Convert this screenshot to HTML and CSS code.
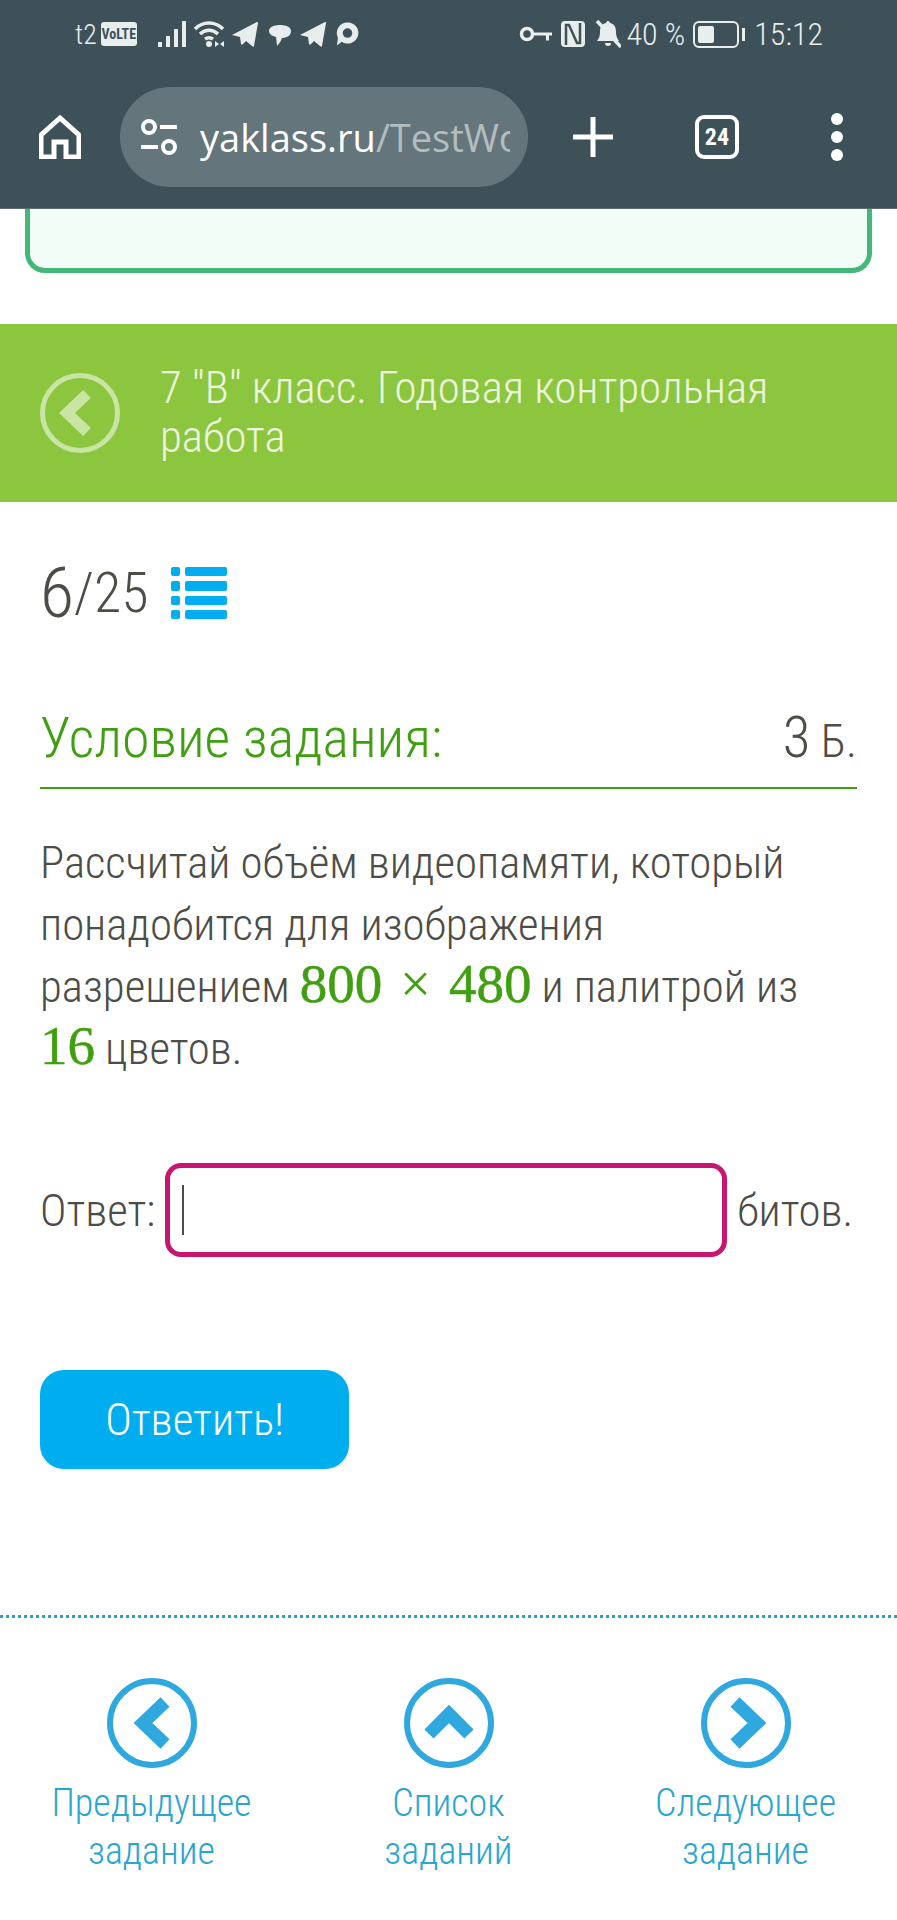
FILE: index.html
```html
<!DOCTYPE html>
<html lang="ru">
<head>
    <meta charset="UTF-8">
    <meta name="viewport" content="width=device-width, initial-scale=1.0">
    <title>Условие задания</title>
    <link rel="stylesheet" href="styles.css">
</head>
<body>
    <header class="chrome">
        <div class="status">
            <div class="status-group">
                <span class="carrier">t2</span>
                <span class="volte">VoLTE</span>
                <svg class="ic-signal" viewBox="0 0 28 26"><path d="M0 21h4v5H0zM8 15h4v11H8zM16 8h4v18h-4zM24 0h4v26h-4z"/></svg>
                <svg class="ic-wifi" viewBox="0 0 32 28"><path class="line" d="M2 9C10 1 22 1 30 9M7 14c6-5 12-5 18 0M12 19c3-2 5-2 8 0"/><circle cx="16" cy="24" r="3"/><path d="M22 21l4 3-4 3zM31 21l-4 3 4 3z"/></svg>
                <svg class="ic-plane" viewBox="0 0 26 26"><path d="M0 14L25 1c1 0 1 0 1 1l-4 23c0 1-1 1-2 0l-6-5-3 3c-1 1-2 1-2 0l-1-7z"/></svg>
                <svg class="ic-chat" viewBox="0 0 26 26"><path d="M2 10c0-4 5-6 11-6s11 2 11 6c0 5-5 7-9 7-1 3-3 6-5 8l-1-9C5 15 2 13 2 10z"/></svg>
                <svg class="ic-plane" viewBox="0 0 26 26"><path d="M0 14L25 1c1 0 1 0 1 1l-4 23c0 1-1 1-2 0l-6-5-3 3c-1 1-2 1-2 0l-1-7z"/></svg>
                <svg class="ic-ring" viewBox="0 0 24 26"><path d="M12 1a11 11 0 1 1-6 20l-5 4 1-8A11 11 0 0 1 12 1zm0 6a5 5 0 1 0 0 10 5 5 0 0 0 0-10z" fill-rule="evenodd"/></svg>
            </div>
            <div class="status-group">
                <svg class="ic-key" viewBox="0 0 33 16"><circle class="line" cx="8" cy="8" r="5.500"/><path d="M13 6.500h20v3h-3v5h-3v-5h-14z"/></svg>
                <svg class="ic-nfc" viewBox="0 0 24 26"><path d="M4 0h16a4 4 0 0 1 4 4v18a4 4 0 0 1-4 4H4a4 4 0 0 1-4-4V4a4 4 0 0 1 4-4z"/><path class="cut" d="M5 24V4h3l8 18h3V2"/></svg>
                <svg class="ic-bell" viewBox="0 0 26 28"><path d="M13 1c1 0 2 1 2 2 5 1 6 5 6 9 0 4 1 6 3 9H2c2-3 3-5 3-9 0-4 1-8 6-9 0-1 1-2 2-2zM10 23h6a3 3 0 0 1-6 0z"/><path class="cut-thin" d="M2 1l24 26"/></svg>
                <span class="battery-text">40 %</span>
                <span class="battery"><span class="battery-fill"></span></span>
                <span class="battery-cap"></span>
                <span class="clock">15:12</span>
            </div>
        </div>
        <div class="toolbar">
            <svg class="ic-home" viewBox="0 0 42 44"><path d="M21 3L2 20v22h13V27h12v15h13V20z"/></svg>
            <div class="url-pill">
                <svg class="ic-tune" viewBox="0 0 38 38"><circle cx="9" cy="9" r="6"/><path d="M20 9h17M1 29h17"/><circle cx="29" cy="29" r="6"/></svg>
                <div class="url-text"><span class="url-host">yaklass.ru</span>/TestWork</div>
            </div>
            <svg class="ic-plus" viewBox="0 0 40 40"><path d="M20 0v40M0 20h40"/></svg>
            <div class="tabs">24</div>
            <div class="dots"><span></span><span></span><span></span></div>
        </div>
    </header>

    <div class="prev-card"></div>

    <section class="banner">
        <svg class="ic-back" viewBox="0 0 80 80"><circle cx="40" cy="40" r="37.500"/><path d="M47 21L27 40l20 19"/></svg>
        <h1 class="banner-title">7 "В" класс. Годовая контрольная работа</h1>
    </section>

    <main class="task">
        <div class="counter">
            <span class="counter-now">6</span><span>/25</span>
            <svg class="ic-list" viewBox="0 0 56 52"><rect x="0" y="0" width="9" height="9" rx="2"/><rect x="14" y="0" width="42" height="9" rx="2"/><rect x="0" y="14" width="9" height="10" rx="2"/><rect x="14" y="14" width="42" height="10" rx="2"/><rect x="0" y="29" width="9" height="9" rx="2"/><rect x="14" y="29" width="42" height="9" rx="2"/><rect x="0" y="43" width="9" height="9" rx="2"/><rect x="14" y="43" width="42" height="9" rx="2"/></svg>
        </div>

        <div class="task-head">
            <h2 class="task-title">Условие задания:</h2>
            <div class="task-score"><span class="score-num">3</span> Б.</div>
        </div>

        <p class="task-text">Рассчитай объём видеопамяти, который понадобится для изображения разрешением <span class="math">800 <span class="times">×</span> 480</span> и палитрой из <span class="math">16</span> цветов.</p>

        <div class="answer">
            <label for="answer-input">Ответ:</label>
            <div class="answer-box"><span class="caret"></span></div>
            <span>битов.</span>
        </div>

        <button class="submit" type="button">Ответить!</button>
    </main>

    <nav class="task-nav">
        <a href="#" class="nav-item">
            <svg viewBox="0 0 90 90"><circle cx="45" cy="45" r="42"/><path d="M58 24L36 45l22 21"/></svg>
            <span>Предыдущее задание</span>
        </a>
        <a href="#" class="nav-item">
            <svg viewBox="0 0 90 90"><circle cx="45" cy="45" r="42"/><path d="M25 56l20-20 20 20"/></svg>
            <span>Список заданий</span>
        </a>
        <a href="#" class="nav-item">
            <svg viewBox="0 0 90 90"><circle cx="45" cy="45" r="42"/><path d="M34 24l22 21-22 21"/></svg>
            <span>Следующее задание</span>
        </a>
    </nav>
</body>
</html>
```

FILE: styles.css
```css
* {
    box-sizing: border-box;
}
body {
    margin: 0;
    height: 1920px;
    overflow: hidden;
    background-color: #ffffff;
    color: #4d4d47;
    font-family: Roboto, "Liberation Sans", sans-serif;
    font-weight: 300;
    font-stretch: 75%;
}

/* browser chrome */
.chrome {
    height: 209px;
    background-color: #3e5159;
    border-bottom: 1px solid #5c6c72;
}
.status {
    display: flex;
    justify-content: space-between;
    align-items: center;
    height: 68px;
    padding: 0 74px 0 75px;
    color: #e8eded;
    font-size: 32px;
    font-weight: 300;
}
.status svg {
    fill: #e8eded;
    display: block;
}
.status-group {
    display: flex;
    align-items: center;
}
.status .line, .status .cut, .status .cut-thin {
    fill: none;
    stroke: #e8eded;
    stroke-width: 3.5;
}
.status .cut {
    stroke: #3e5159;
    stroke-width: 2.5;
}
.carrier {
    margin-right: 4px;
    font-size: 28px;
}
.volte {
    width: 36px;
    height: 24px;
    border-radius: 3px;
    background-color: #e8eded;
    color: #3e5159;
    font-size: 14px;
    font-weight: 700;
    line-height: 24px;
    text-align: center;
}
.ic-signal { width: 28px; height: 26px; margin-left: 21px; }
.ic-wifi { width: 32px; height: 28px; margin-left: 7px; }
.ic-plane { width: 26px; height: 26px; margin-left: 7px; }
.ic-chat { width: 26px; height: 26px; margin-left: 9px; }
.ic-ring { width: 23px; height: 26px; margin-left: 10px; }
.ic-key { width: 33px; height: 16px; }
.ic-nfc { width: 24px; height: 26px; margin-left: 9px; }
.ic-bell { width: 26px; height: 28px; margin-left: 10px; }
.battery-text { margin-left: 6px; }
.battery {
    width: 46px;
    height: 27px;
    margin-left: 8px;
    padding: 3px;
    border: 2px solid #e8eded;
    border-radius: 6px;
}
.battery-fill {
    display: block;
    width: 16px;
    height: 100%;
    border-radius: 2px;
    background-color: #e8eded;
}
.battery-cap {
    width: 3px;
    height: 13px;
    margin-left: 3px;
    background-color: #e8eded;
}
.clock { margin-left: 9px; }

.toolbar {
    display: flex;
    align-items: center;
    height: 140px;
    padding: 0 0 2px 39px;
}
.ic-home {
    width: 42px;
    height: 44px;
    fill: none;
    stroke: #ffffff;
    stroke-width: 5;
}
.url-pill {
    display: flex;
    align-items: center;
    width: 408px;
    height: 100px;
    margin-left: 39px;
    padding: 0 18px 0 20px;
    border-radius: 50px;
    background-color: #64767c;
}
.ic-tune {
    flex: none;
    width: 38px;
    height: 38px;
    fill: none;
    stroke: #ffffff;
    stroke-width: 4;
}
.url-text {
    overflow: hidden;
    margin-left: 22px;
    color: #b3bdc0;
    font-family: "Open Sans", Roboto, sans-serif;
    font-size: 38px;
    font-stretch: normal;
    font-weight: 400;
    line-height: 50px;
    white-space: nowrap;
}
.url-host {
    color: #ffffff;
}
.ic-plus {
    flex: none;
    width: 40px;
    height: 40px;
    margin-left: 45px;
    fill: none;
    stroke: #ffffff;
    stroke-width: 5;
}
.tabs {
    flex: none;
    width: 44px;
    height: 44px;
    margin-left: 82px;
    border: 4px solid #ffffff;
    border-radius: 9px;
    color: #ffffff;
    font-size: 24px;
    font-weight: 700;
    line-height: 36px;
    text-align: center;
}
.dots {
    display: flex;
    flex-direction: column;
    gap: 6px;
    margin-left: 92px;
}
.dots span {
    width: 12px;
    height: 12px;
    border-radius: 50%;
    background-color: #ffffff;
}

/* end of the block above, scrolled off */
.prev-card {
    height: 64px;
    margin: 0 25px;
    border: 5px solid #41b87a;
    border-top: none;
    border-radius: 0 0 20px 20px;
    background-color: #f3fdf8;
}

.banner {
    display: flex;
    align-items: center;
    height: 178px;
    margin-top: 51px;
    padding: 0 120px 0 40px;
    background-color: #8cc63f;
}
.ic-back {
    flex: none;
    width: 80px;
    height: 80px;
    fill: none;
    stroke: #c9e5a4;
    stroke-width: 5;
}
.ic-back path {
    stroke-width: 11;
}
.banner-title {
    margin: 0 0 3px 40px;
    color: #eef7e0;
    font-size: 44.800px;
    font-weight: 300;
    line-height: 49px;
}

.task {
    padding: 0 40px;
}
.counter {
    display: flex;
    align-items: center;
    height: 60px;
    margin-top: 61px;
    font-size: 56px;
    line-height: 60px;
}
.counter-now {
    font-size: 70px;
}
.ic-list {
    width: 56px;
    height: 52px;
    margin-left: 23px;
    fill: #00aeef;
}
.task-head {
    display: flex;
    justify-content: space-between;
    align-items: baseline;
    height: 91px;
    margin-top: 75px;
    border-bottom: 2px solid #3f9f10;
}
.task-title {
    margin: 0;
    padding-top: 4px;
    color: #3f9f10;
    font-size: 56px;
    font-weight: 300;
    line-height: 72px;
}
.task-score {
    font-size: 46px;
}
.score-num {
    font-size: 57px;
}
.task-text {
    margin: 43px 0 0;
    font-size: 44.800px;
    line-height: 62px;
}
.math {
    color: #3f9f10;
    font-family: "Liberation Serif", serif;
    font-size: 55px;
    font-weight: 400;
    font-stretch: normal;
    line-height: 1;
    -webkit-text-stroke: 0.5px #3f9f10;
}
.times {
    margin: 0 4px;
    -webkit-text-stroke: 0;
}
.answer {
    display: flex;
    align-items: center;
    gap: 10px;
    height: 94px;
    margin-top: 83px;
    font-size: 44.800px;
}
.answer-box {
    display: flex;
    align-items: center;
    flex: none;
    width: 562px;
    height: 94px;
    padding-left: 12px;
    border: 5px solid #c8156f;
    border-radius: 16px;
}
.caret {
    width: 2px;
    height: 50px;
    background-color: #4d4d47;
}
.submit {
    display: block;
    width: 309px;
    height: 99px;
    margin-top: 113px;
    border: none;
    border-radius: 24px;
    background-color: #00aeef;
    color: #ffffff;
    font: inherit;
    font-size: 45px;
    font-stretch: 75%;
}

.task-nav {
    display: grid;
    grid-template-columns: repeat(3, 297px);
    margin-top: 146px;
    padding: 60px 0 0 3px;
    border-top: 3px dotted #2e9fc4;
}
.nav-item {
    display: flex;
    flex-direction: column;
    align-items: center;
    color: #2aa5cf;
    font-size: 38px;
    line-height: 48px;
    text-align: center;
    text-decoration: none;
}
.nav-item svg {
    width: 90px;
    height: 90px;
    margin-bottom: 11px;
    fill: none;
    stroke: #2ea8df;
    stroke-width: 6;
}
.nav-item svg path {
    stroke-width: 13;
}
.nav-item span {
    width: 220px;
}
```
